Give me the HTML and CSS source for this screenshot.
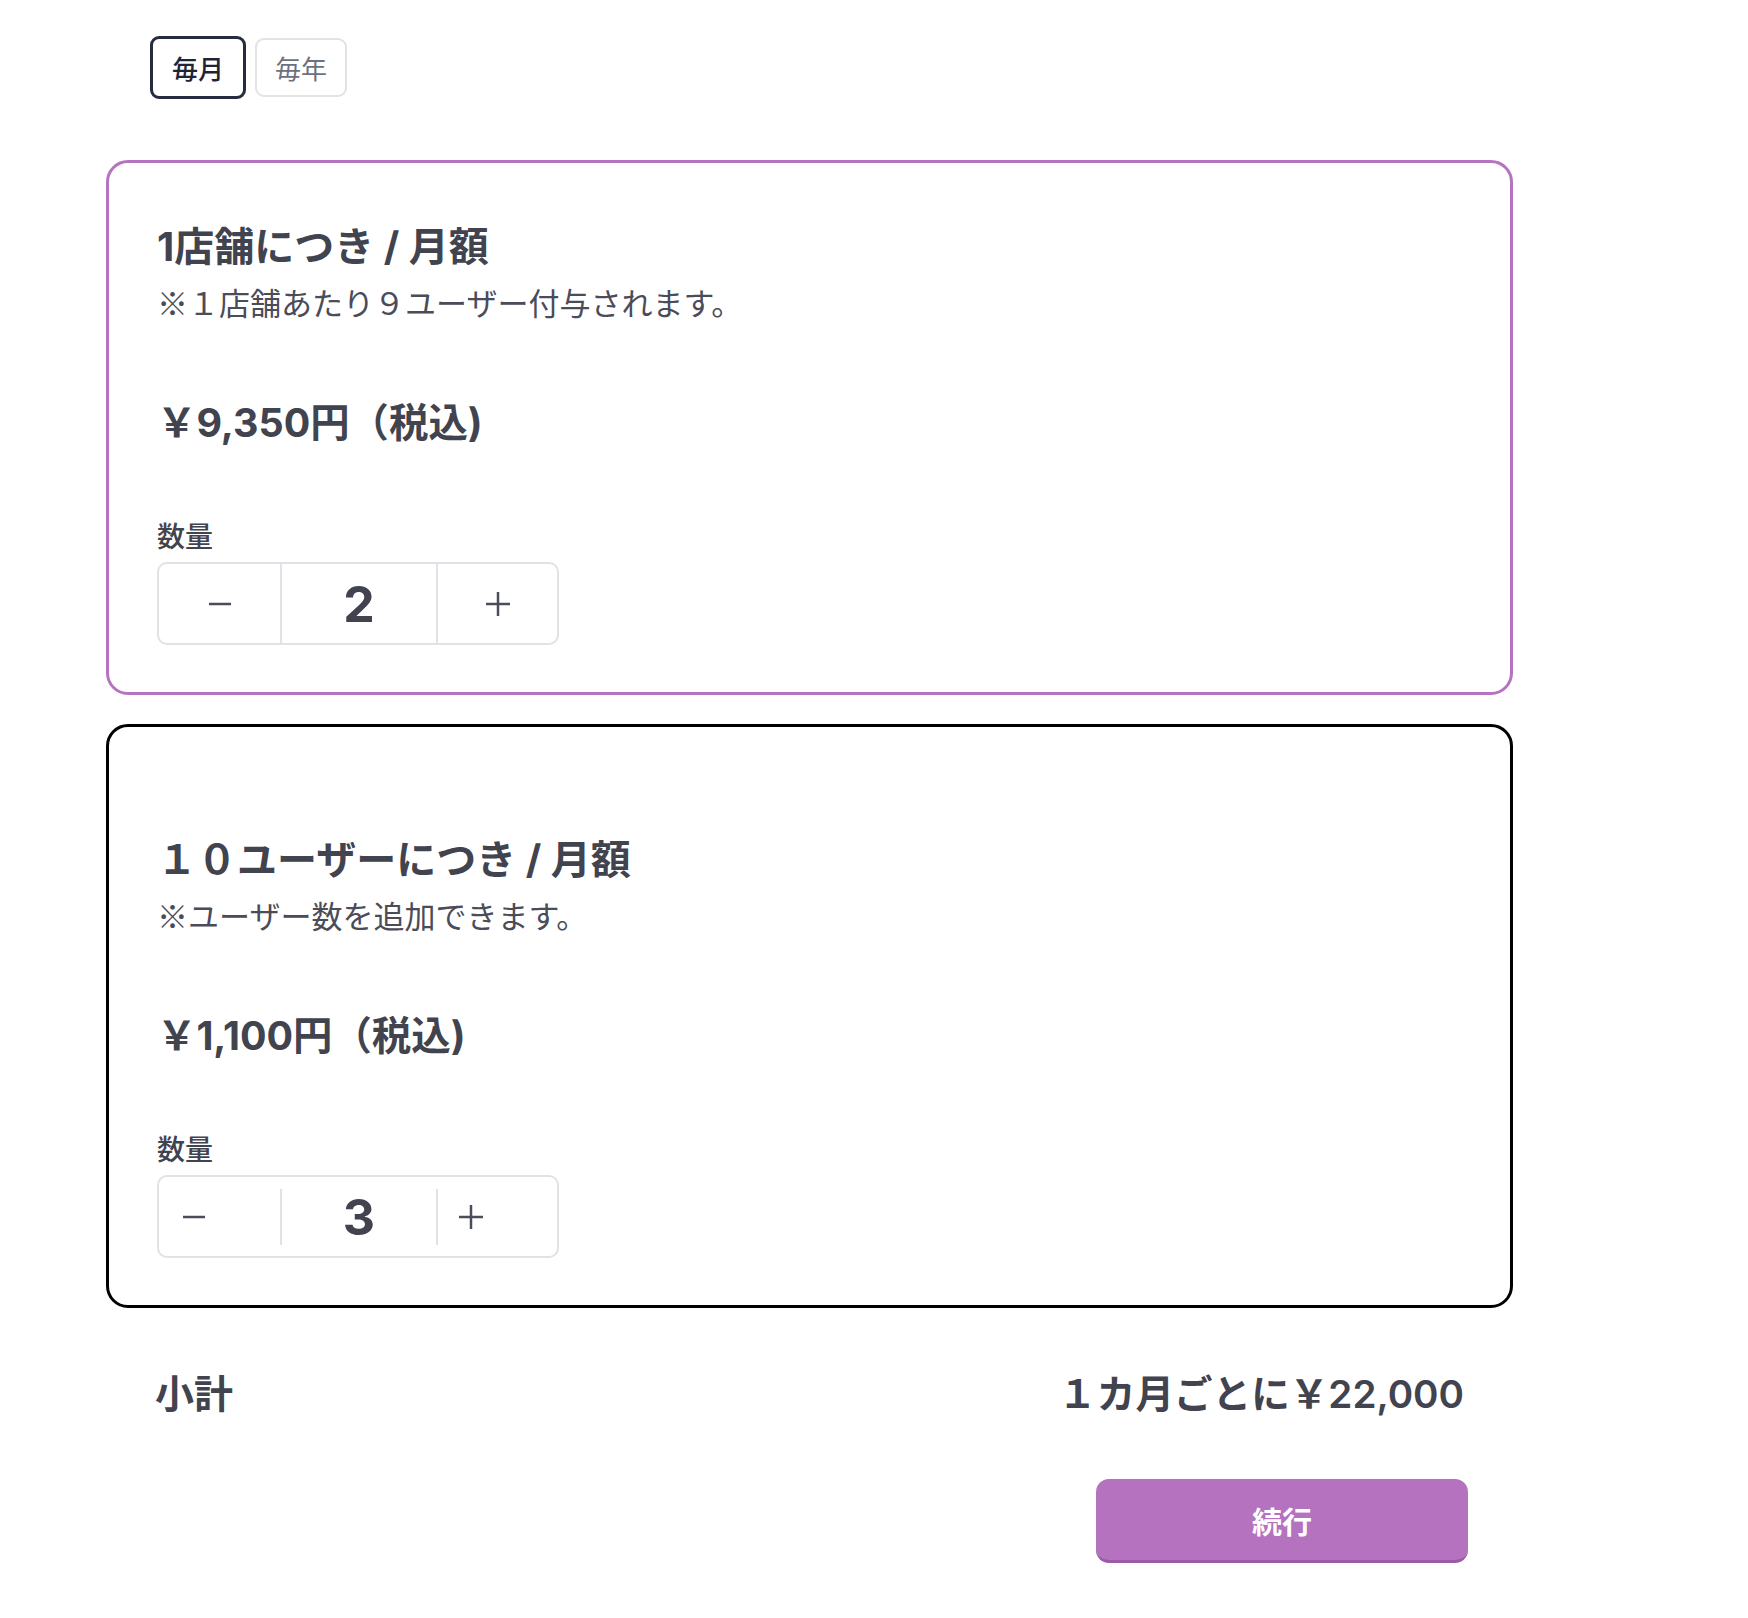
FILE: index.html
```html
<!DOCTYPE html>
<html lang="ja">
<head>
<meta charset="utf-8">
<title>プラン選択</title>
<link rel="stylesheet" href="styles.css">
</head>
<body>
<main class="page">
  <div class="toggle">
    <button class="tab tab-on">毎月</button>
    <button class="tab tab-off">毎年</button>
  </div>

  <section class="card card-purple">
    <h2 class="title">1店舗につき / 月額</h2>
    <p class="note">※１店舗あたり９ユーザー付与されます。</p>
    <p class="price">￥9,350円（税込)</p>
    <div class="qty-label">数量</div>
    <div class="stepper">
      <button class="step-btn minus"><svg width="22" height="22" viewBox="0 0 22 22"><line x1="0" y1="11" x2="22" y2="11"/></svg></button>
      <div class="step-val">2</div>
      <button class="step-btn plus"><svg width="24" height="24" viewBox="0 0 24 24"><line x1="0" y1="12" x2="24" y2="12"/><line x1="12" y1="0" x2="12" y2="24"/></svg></button>
    </div>
  </section>

  <section class="card card-dark">
    <div class="card-spacer"></div>
    <h2 class="title">１０ユーザーにつき / 月額</h2>
    <p class="note">※ユーザー数を追加できます。</p>
    <p class="price">￥1,100円（税込)</p>
    <div class="qty-label">数量</div>
    <div class="stepper stepper-inset">
      <button class="step-btn minus"><svg width="22" height="22" viewBox="0 0 22 22"><line x1="0" y1="11" x2="22" y2="11"/></svg></button>
      <div class="step-val">3</div>
      <button class="step-btn plus"><svg width="24" height="24" viewBox="0 0 24 24"><line x1="0" y1="12" x2="24" y2="12"/><line x1="12" y1="0" x2="12" y2="24"/></svg></button>
    </div>
  </section>

  <div class="subtotal">
    <span class="sub-label">小計</span>
    <span class="sub-value">１カ月ごとに￥22,000</span>
  </div>

  <div class="actions">
    <button class="continue">続行</button>
  </div>
</main>
</body>
</html>
```

FILE: styles.css
```css
* { box-sizing: border-box; }

body {
  margin: 0;
  background: #ffffff;
  font-family: "Inter", "Noto Sans CJK JP", sans-serif;
  color: #41434f;
}

.page {
  width: 1407px;
  margin-left: 106px;
  padding-top: 36px;
  padding-bottom: 40px;
}

.toggle {
  display: flex;
  align-items: center;
  gap: 9px;
  margin-left: 44px;
}

.tab {
  font-family: "Noto Sans CJK JP", sans-serif;
  font-size: 26px;
  line-height: 39px;
  background: #ffffff;
  border-radius: 9px;
  cursor: pointer;
}

.tab-on {
  padding: 9px 19px;
  border: 3px solid #262c40;
  color: #1f2537;
  font-weight: 500;
}

.tab-off {
  padding: 8px 18px;
  border: 2px solid #e2e3e8;
  color: #6b7183;
  font-weight: 400;
}

.card {
  border: 3px solid #000;
  border-radius: 22px;
  padding: 59px 48px 47px 48px;
}

.card-purple {
  border-color: #b574c0;
  margin-top: 61px;
}

.card-dark {
  border-color: #000000;
  margin-top: 29px;
}

.card-spacer {
  height: 49px;
}

.title {
  margin: 0;
  font-size: 40px;
  line-height: 50px;
  font-weight: 700;
  color: #41434f;
}

.note {
  margin: 10px 0 0 0;
  font-family: "Noto Sans CJK JP", sans-serif;
  font-size: 31px;
  line-height: 40px;
  font-weight: 400;
  color: #4a4c59;
}

.price {
  margin: 76px 0 0 0;
  font-size: 39.4px;
  line-height: 50px;
  font-weight: 700;
  color: #41434f;
}

.qty-label {
  margin-top: 69px;
  font-family: "Noto Sans CJK JP", sans-serif;
  font-size: 28px;
  line-height: 36px;
  font-weight: 500;
  color: #41434f;
}

.stepper {
  margin-top: 9px;
  display: flex;
  width: 402px;
  height: 83px;
  border: 2px solid #e1e2e7;
  border-radius: 10px;
  background: #ffffff;
}

.step-btn {
  display: flex;
  align-items: center;
  justify-content: center;
  border: 0;
  padding: 0;
  background: transparent;
  cursor: pointer;
}

.step-btn svg line {
  stroke: #4a4c5a;
  stroke-width: 2.5;
}

.minus { width: 121px; }
.plus { width: 119px; }

.step-val {
  width: 158px;
  display: flex;
  align-items: center;
  justify-content: center;
  border-left: 2px solid #e1e2e7;
  border-right: 2px solid #e1e2e7;
  font-size: 50px;
  font-weight: 700;
  color: #41434f;
}

.stepper-inset .step-val {
  align-self: center;
  height: 56px;
}

.stepper-inset .step-btn {
  justify-content: flex-start;
}

.stepper-inset .minus { padding-left: 24px; }
.stepper-inset .plus { padding-left: 21px; }

.subtotal {
  display: flex;
  justify-content: space-between;
  align-items: center;
  margin-top: 58px;
  padding: 0 49px 0 49px;
  height: 50px;
}

.sub-label {
  font-family: "Noto Sans CJK JP", sans-serif;
  font-size: 39px;
  font-weight: 700;
  color: #41434f;
}

.sub-value {
  font-size: 38.6px;
  font-weight: 600;
  color: #41434f;
}

.actions {
  display: flex;
  justify-content: flex-end;
  padding-right: 45px;
  margin-top: 63px;
}

.continue {
  width: 372px;
  height: 84px;
  border: 0;
  border-bottom: 3px solid #9b5aa7;
  border-radius: 13px;
  background: #b572bf;
  color: #ffffff;
  font-family: "Noto Sans CJK JP", sans-serif;
  font-size: 30px;
  font-weight: 600;
  cursor: pointer;
}
```
